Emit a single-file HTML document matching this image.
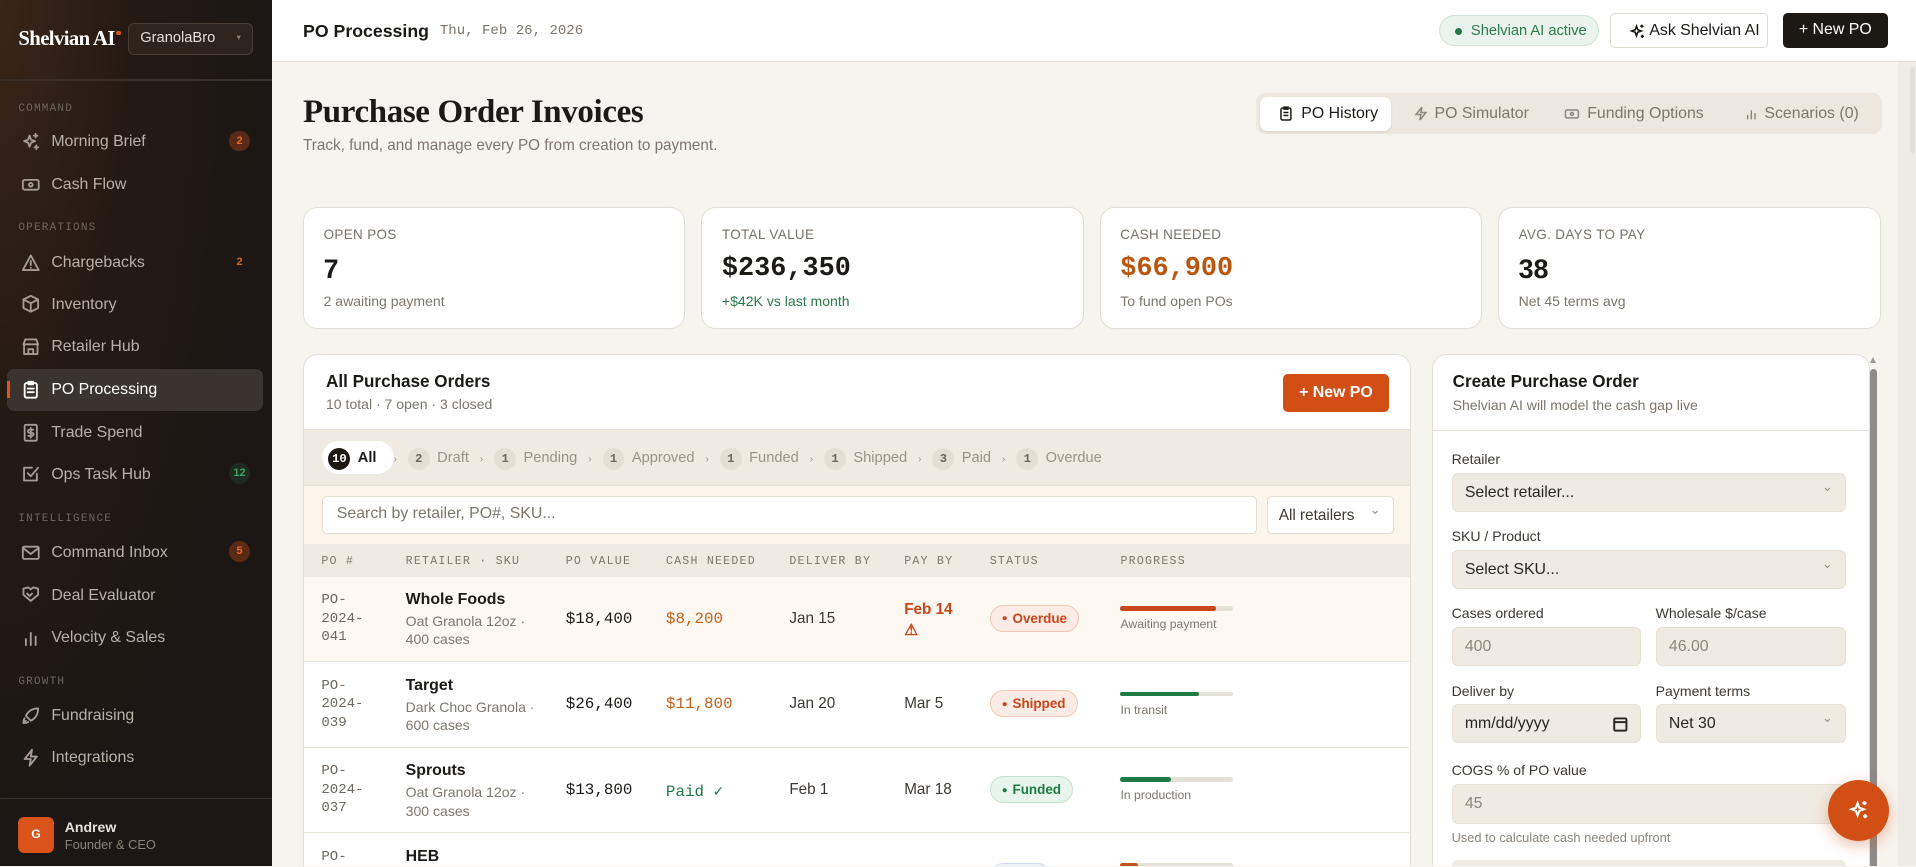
<!DOCTYPE html>
<html><head><meta charset="utf-8">
<style>
*{box-sizing:border-box;margin:0;padding:0}
html,body{width:1916px;height:867px;overflow:hidden}
body{background:#f6f4ef;font-family:"Liberation Sans",sans-serif;color:#1c1a17}
#root{zoom:1.2219;width:1568px;height:709px;position:relative;overflow:hidden}
.abs{position:absolute}
.side{left:0;top:0;width:223px;height:709px;background:radial-gradient(ellipse at 0 0,#3a2518 0%,#231a14 35%,#1c1714 70%);color:#cfc8c0}
.logo{left:15px;top:22px;font-family:"Liberation Serif",serif;font-weight:bold;font-size:17px;color:#fff;letter-spacing:-0.5px}
.logo i{display:inline-block;width:4px;height:4px;border-radius:50%;background:#e0541c;vertical-align:top;margin-top:3px;margin-left:1px}
.org{left:105px;top:19px;width:102px;height:26px;border:1px solid #4a3d34;border-radius:5px;background:#2e241e;color:#e6e0da;font-size:12px;padding:5px 9px}
.org:after{content:"▾";position:absolute;right:9px;top:6px;font-size:7px;color:#8a7f75}
.sdiv{left:0;width:223px;height:1px;background:#3a2f28}
.sec{left:15px;font-family:"Liberation Mono",monospace;font-size:9px;letter-spacing:1px;color:#6e655d}
.ni{left:6px;width:209px;height:34px;font-size:13px;color:#b9b1a9;padding:10px 0 0 36px}
.ni svg{position:absolute;left:11px;top:9px;width:16px;height:16px;stroke:#a59d95;fill:none;stroke-width:1.5;stroke-linecap:round;stroke-linejoin:round}
.ni.act{background:#3a3330;color:#fff;border-radius:6px}
.ni.act svg{stroke:#fff}
.ni.act:before{content:"";position:absolute;left:0;top:10px;width:2px;height:14px;background:#e0541c}
.bd{position:absolute;right:10px;top:8px;width:18px;height:17px;border-radius:9px;font-size:9px;text-align:center;line-height:17px;font-weight:bold}
.bo{background:#5a2a17;color:#e5682b}.bg{color:#3aa160;background:#1f2a22}
.hdr{left:223px;top:0;width:1345px;height:51px;background:#fff;border-bottom:1px solid #e6e1d8}
.card{background:#fff;border:1px solid #e4dfd5;border-radius:12px}
.lbl{font-size:11px;color:#777068;letter-spacing:.3px}
.mono{font-family:"Liberation Mono",monospace}
.pill{display:inline-block;width:18px;height:18px;border-radius:9px;background:#e4dfd4;color:#6e675f;font-size:10px;font-weight:bold;text-align:center;line-height:18px;margin-right:6px;font-family:"Liberation Mono",monospace}
.th{font-family:"Liberation Mono",monospace;font-size:9.5px;letter-spacing:1px;color:#7d766d;top:454px}
.row{left:249px;width:904px;height:70px;border-bottom:1px solid #ebe6dd}
.cell{position:absolute;font-size:12.5px}
.po{font-family:"Liberation Mono",monospace;font-size:11.5px;color:#6f6860;line-height:15px;left:14px;top:12px}
.rt b{display:block;font-size:13px;color:#1c1a17;margin-bottom:2px}
.rt{left:83px;top:12px;font-size:11.5px;color:#7d766d;line-height:15px;width:110px}
.val{left:214px;top:27px;font-family:"Liberation Mono",monospace;font-size:13px}
.cn{left:296px;top:27px;font-family:"Liberation Mono",monospace;font-size:13px;color:#c0621c}
.dl{left:397px;top:27px;color:#3d3833}
.pb{left:491px;top:27px;color:#3d3833}
.st{left:561px;top:23px;height:22px;border-radius:11px;font-size:11px;font-weight:bold;padding:4px 9px 0 9px}
.st:before{content:"●";font-size:8px;margin-right:4px;vertical-align:1px}
.ov{background:#fdece6;border:1px solid #f3c7b6;color:#c9461a}
.fu{background:#e8f5ec;border:1px solid #c2e3cd;color:#1f7a45}
.prog{left:668px;top:24px;width:92px;height:4px;border-radius:2px;background:#e6e1d7}
.prog i{display:block;height:4px;border-radius:2px}
.pl{left:668px;top:33px;font-size:10px;color:#7d766d}
.fl{font-size:11.5px;color:#3d3833;left:1188px}
.inp{left:1188px;height:32px;background:#f0ebe2;border:1px solid #e6e0d5;border-radius:5px;font-size:13px;color:#2a2622;padding:8px 10px}
.inp.g{color:#8d867e}
.chev:after{content:"⌄";position:absolute;right:10px;top:4px;font-size:11px;color:#9a938a}
</style></head><body><div id="root">

<div class="abs side">
 <div class="abs logo">Shelvian AI<i></i></div>
 <div class="abs org">GranolaBro</div>
 <div class="abs sdiv" style="top:65px"></div>
 <div class="abs sec" style="top:84px">COMMAND</div>
 <div class="abs ni" style="top:99px"><svg viewBox="0 0 16 16"><path d="M7 3l1.2 3.3L11.5 7.5 8.2 8.7 7 12 5.8 8.7 2.5 7.5 5.8 6.3z"/><path d="M12 1.5v3M10.5 3h3M12.5 11v3M11 12.5h3"/></svg>Morning Brief<span class="bd bo">2</span></div>
 <div class="abs ni" style="top:134px"><svg viewBox="0 0 16 16"><rect x="1.5" y="4" width="13" height="8" rx="1.5"/><circle cx="8" cy="8" r="1.5"/></svg>Cash Flow</div>
 <div class="abs sec" style="top:182px">OPERATIONS</div>
 <div class="abs ni" style="top:198px"><svg viewBox="0 0 16 16"><path d="M8 2L1.5 14h13z"/><path d="M8 6.5v3.5M8 12v.2"/></svg>Chargebacks<span class="bd" style="color:#d0611f">2</span></div>
 <div class="abs ni" style="top:232px"><svg viewBox="0 0 16 16"><path d="M8 1.5l6 3v7l-6 3-6-3v-7z"/><path d="M2 4.5l6 3 6-3M8 7.5v7"/></svg>Inventory</div>
 <div class="abs ni" style="top:267px"><svg viewBox="0 0 16 16"><path d="M2 6l1.5-4h9L14 6z"/><path d="M2.5 6v8h11V6M6 14v-4h4v4"/></svg>Retailer Hub</div>
 <div class="abs ni act" style="top:302px"><svg viewBox="0 0 16 16"><rect x="3" y="2.5" width="10" height="12" rx="1.5"/><path d="M6 1.5h4v2H6zM5.5 7h5M5.5 10h5"/></svg>PO Processing</div>
 <div class="abs ni" style="top:337px"><svg viewBox="0 0 16 16"><rect x="3" y="1.5" width="10" height="13" rx="1"/><path d="M10 5.5H7a1.2 1.2 0 000 2.5h2a1.2 1.2 0 010 2.5H6M8 4v8"/></svg>Trade Spend</div>
 <div class="abs ni" style="top:371px"><svg viewBox="0 0 16 16"><path d="M13 8v5.5H2.5V3H9"/><path d="M5.5 7.5L8 10l6-7"/></svg>Ops Task Hub<span class="bd bg">12</span></div>
 <div class="abs sec" style="top:420px">INTELLIGENCE</div>
 <div class="abs ni" style="top:435px"><svg viewBox="0 0 16 16"><rect x="1.5" y="3" width="13" height="10" rx="1"/><path d="M1.5 4l6.5 5 6.5-5"/></svg>Command Inbox<span class="bd bo">5</span></div>
 <div class="abs ni" style="top:470px"><svg viewBox="0 0 16 16"><path d="M2 3l4-1 2 1.5L10 2l4 1v5l-6 5-6-5z"/><path d="M5 7l2 2 2-2"/></svg>Deal Evaluator</div>
 <div class="abs ni" style="top:505px"><svg viewBox="0 0 16 16"><path d="M4 14V9M8 14V4M12 14V7"/></svg>Velocity &amp; Sales</div>
 <div class="abs sec" style="top:553px">GROWTH</div>
 <div class="abs ni" style="top:569px"><svg viewBox="0 0 16 16"><path d="M6 10L4 8c2-4 5-6 10-6 0 5-2 8-6 10z"/><path d="M4 12l-2 2M3 10c-1 1-1 3-1 4 1 0 3 0 4-1"/></svg>Fundraising</div>
 <div class="abs ni" style="top:603px"><svg viewBox="0 0 16 16"><path d="M9 1.5L3 9h5l-1 5.5L13 7H8z"/></svg>Integrations</div>
 <div class="abs sdiv" style="top:653px"></div>
 <div class="abs" style="left:15px;top:669px;width:29px;height:29px;border-radius:5px;background:#d9531a;color:#fff;font-size:10px;font-weight:bold;text-align:center;line-height:29px">G</div>
 <div class="abs" style="left:53px;top:670px;font-size:11.5px;color:#e8e2dc;font-weight:bold">Andrew</div>
 <div class="abs" style="left:53px;top:685px;font-size:10.5px;color:#8c837a">Founder &amp; CEO</div>
</div>

<div class="abs hdr">
 <div class="abs" style="left:25px;top:17px;font-size:14.5px;font-weight:bold;color:#1c1a17">PO Processing</div>
 <div class="abs mono" style="left:137px;top:19px;font-size:11.5px;color:#7d766d">Thu, Feb 26, 2026</div>
 <div class="abs" style="left:955px;top:12px;width:131px;height:26px;border-radius:13px;background:#eaf3ee;border:1px solid #cfe3d6;color:#2a7a4b;font-size:12px;padding:6px 0 0 25px">Shelvian AI active<span style="position:absolute;left:12px;top:10px;width:6px;height:6px;border-radius:3px;background:#1f7a45"></span></div>
 <div class="abs" style="left:1095px;top:11px;width:129px;height:28px;border:1px solid #e0dbd2;border-radius:4px;background:#fff;font-size:13px;padding:6px 0 0 31px">Ask Shelvian AI<svg style="position:absolute;left:14px;top:7px" width="14" height="14" viewBox="0 0 16 16" fill="none" stroke="#1c1a17" stroke-width="1.5"><path d="M7 3l1.2 3.3L11.5 7.5 8.2 8.7 7 12 5.8 8.7 2.5 7.5 5.8 6.3z"/><path d="M12 1.5v3M10.5 3h3M12.5 11v3M11 12.5h3"/></svg></div>
 <div class="abs" style="left:1236px;top:11px;width:86px;height:28px;border-radius:4px;background:#1c1814;color:#fff;font-size:13px;text-align:center;line-height:28px">+ New PO</div>
</div>
<div class="abs" style="left:1553px;top:51px;width:15px;height:659px;background:#efece7"></div>
<div class="abs" style="left:1563px;top:55px;width:4px;height:70px;background:#e2ded8;border-radius:2px"></div>

<div class="abs" style="left:248px;top:77px;font-family:'Liberation Serif',serif;font-weight:bold;font-size:27px;letter-spacing:-0.3px">Purchase Order Invoices</div>
<div class="abs" style="left:248px;top:112px;font-size:12.5px;color:#7d766d">Track, fund, and manage every PO from creation to payment.</div>

<div class="abs" style="left:1028px;top:76px;width:512px;height:34px;background:#ece8df;border-radius:8px;font-size:13px;color:#7d766d">
 <div class="abs" style="left:3px;top:3px;width:107px;height:28px;background:#fff;border-radius:6px;box-shadow:0 1px 2px rgba(0,0,0,.08);color:#1c1a17;padding:7px 0 0 34px">PO History<svg style="position:absolute;left:15px;top:7px" width="13" height="14" viewBox="0 0 16 16" fill="none" stroke="#1c1a17" stroke-width="1.5"><rect x="3" y="2.5" width="10" height="12" rx="1.5"/><path d="M6 1.5h4v2H6zM5.5 7h5M5.5 10h5"/></svg></div>
 <div class="abs" style="left:128px;top:10px;padding-left:18px">PO Simulator<svg style="position:absolute;left:0;top:0" width="13" height="14" viewBox="0 0 16 16" fill="none" stroke="#8d867e" stroke-width="1.5"><path d="M9 1.5L3 9h5l-1 5.5L13 7H8z"/></svg></div>
 <div class="abs" style="left:252px;top:10px;padding-left:19px">Funding Options<svg style="position:absolute;left:0;top:1px" width="13" height="13" viewBox="0 0 16 16" fill="none" stroke="#8d867e" stroke-width="1.5"><rect x="1.5" y="4" width="13" height="8" rx="1.5"/><circle cx="8" cy="8" r="1.5"/></svg></div>
 <div class="abs" style="left:399px;top:10px;padding-left:17px">Scenarios (0)<svg style="position:absolute;left:0;top:1px" width="12" height="13" viewBox="0 0 16 16" fill="none" stroke="#8d867e" stroke-width="1.5"><path d="M4 14V9M8 14V4M12 14V7"/></svg></div>
</div>

<div class="abs card" style="left:248px;top:169px;width:313px;height:100px"><div class="abs lbl" style="left:16px;top:16px">OPEN POS</div><div class="abs" style="left:16px;top:38px;font-size:22px;font-weight:bold">7</div><div class="abs" style="left:16px;top:70px;font-size:11.5px;color:#7d766d">2 awaiting payment</div></div>
<div class="abs card" style="left:574px;top:169px;width:313px;height:100px"><div class="abs lbl" style="left:16px;top:16px">TOTAL VALUE</div><div class="abs mono" style="left:16px;top:38px;font-size:22px;font-weight:bold">$236,350</div><div class="abs" style="left:16px;top:70px;font-size:11.5px;color:#2a7a4b">+$42K vs last month</div></div>
<div class="abs card" style="left:900px;top:169px;width:313px;height:100px"><div class="abs lbl" style="left:16px;top:16px">CASH NEEDED</div><div class="abs mono" style="left:16px;top:38px;font-size:22px;font-weight:bold;color:#b8560f">$66,900</div><div class="abs" style="left:16px;top:70px;font-size:11.5px;color:#7d766d">To fund open POs</div></div>
<div class="abs card" style="left:1226px;top:169px;width:313px;height:100px"><div class="abs lbl" style="left:16px;top:16px">AVG. DAYS TO PAY</div><div class="abs" style="left:16px;top:38px;font-size:22px;font-weight:bold">38</div><div class="abs" style="left:16px;top:70px;font-size:11.5px;color:#7d766d">Net 45 terms avg</div></div>

<div class="abs card" style="left:248px;top:290px;width:907px;height:420px;overflow:hidden;border-radius:12px 12px 0 0">
 <div class="abs" style="left:18px;top:14px;font-size:14px;font-weight:bold">All Purchase Orders</div>
 <div class="abs" style="left:18px;top:33px;font-size:11.5px;color:#7d766d">10 total · 7 open · 3 closed</div>
 <div class="abs" style="left:801px;top:15px;width:87px;height:31px;border-radius:4px;background:#d14f14;color:#fff;font-size:13px;font-weight:bold;text-align:center;line-height:31px">+ New PO</div>
 <div class="abs" style="left:0;top:60px;width:907px;height:47px;background:#efebe2;border-top:1px solid #e6e1d8;border-bottom:1px solid #e6e1d8"></div>
 <div class="abs" style="left:15px;top:70px;width:59px;height:27px;background:#fff;border-radius:14px"></div>
 <div class="abs" style="left:20px;top:76px;font-size:12px;color:#9a938a;white-space:nowrap;word-spacing:0">
  <span class="pill" style="background:#1c1814;color:#fff">10</span><b style="color:#1c1a17">All</b><span style="margin:0 9px 0 14px;font-size:8px">›</span><span class="pill">2</span>Draft<span style="margin:0 9px;font-size:8px">›</span><span class="pill">1</span>Pending<span style="margin:0 9px;font-size:8px">›</span><span class="pill">1</span>Approved<span style="margin:0 9px;font-size:8px">›</span><span class="pill">1</span>Funded<span style="margin:0 9px;font-size:8px">›</span><span class="pill">1</span>Shipped<span style="margin:0 9px;font-size:8px">›</span><span class="pill">3</span>Paid<span style="margin:0 9px;font-size:8px">›</span><span class="pill">1</span>Overdue</div>
 <div class="abs" style="left:0;top:107px;width:907px;height:47px;background:#fcf5ec"></div>
 <div class="abs" style="left:15px;top:115px;width:765px;height:31px;background:#fff;border:1px solid #e3ded4;border-radius:4px;font-size:13px;color:#7d766d;padding:7px 11px">Search by retailer, PO#, SKU...</div>
 <div class="abs chev" style="left:788px;top:115px;width:104px;height:31px;background:#fff;border:1px solid #e3ded4;border-radius:4px;font-size:12.5px;color:#3d3833;padding:8px 9px">All retailers</div>
 <div class="abs" style="left:0;top:154px;width:907px;height:28px;background:#efebe2"></div>
</div>
<div class="abs th" style="left:263px">PO #</div><div class="abs th" style="left:332px">RETAILER · SKU</div><div class="abs th" style="left:463px">PO VALUE</div><div class="abs th" style="left:545px">CASH NEEDED</div><div class="abs th" style="left:646px">DELIVER BY</div><div class="abs th" style="left:740px">PAY BY</div><div class="abs th" style="left:810px">STATUS</div><div class="abs th" style="left:917px">PROGRESS</div>

<div class="abs row" style="top:472px;background:#fdf8f2">
 <div class="cell po">PO-<br>2024-<br>041</div><div class="cell rt"><b>Whole Foods</b>Oat Granola 12oz · 400 cases</div>
 <div class="cell val">$18,400</div><div class="cell cn">$8,200</div><div class="cell dl">Jan 15</div>
 <div class="cell" style="left:491px;top:19px;color:#c9461a;font-weight:bold;line-height:17px">Feb 14<br>⚠</div>
 <div class="cell st ov">Overdue</div><div class="cell prog"><i style="width:78px;background:#c9461a"></i></div><div class="cell pl">Awaiting payment</div>
</div>
<div class="abs row" style="top:542px;background:#fff">
 <div class="cell po">PO-<br>2024-<br>039</div><div class="cell rt"><b>Target</b>Dark Choc Granola · 600 cases</div>
 <div class="cell val">$26,400</div><div class="cell cn">$11,800</div><div class="cell dl">Jan 20</div><div class="cell pb">Mar 5</div>
 <div class="cell st ov">Shipped</div><div class="cell prog"><i style="width:64px;background:#1f7a45"></i></div><div class="cell pl">In transit</div>
</div>
<div class="abs row" style="top:612px;background:#fff">
 <div class="cell po">PO-<br>2024-<br>037</div><div class="cell rt"><b>Sprouts</b>Oat Granola 12oz · 300 cases</div>
 <div class="cell val">$13,800</div><div class="cell cn" style="color:#1f7a45">Paid ✓</div><div class="cell dl">Feb 1</div><div class="cell pb">Mar 18</div>
 <div class="cell st fu">Funded</div><div class="cell prog"><i style="width:41px;background:#1f7a45"></i></div><div class="cell pl">In production</div>
</div>
<div class="abs row" style="top:682px;height:27px;background:#fff;border:0;overflow:hidden">
 <div class="cell po">PO-</div><div class="cell rt"><b>HEB</b></div>
 <div class="cell st" style="top:24px;background:#eef3fb;border:1px solid #cfdcef;width:50px"></div><div class="cell prog" style="top:24px"><i style="width:14px;background:#c0561a"></i></div>
</div>

<div class="abs card" style="left:1172px;top:290px;width:358px;height:420px;border-radius:12px 12px 0 0;overflow:hidden">
 <div class="abs" style="left:16px;top:14px;font-size:14px;font-weight:bold">Create Purchase Order</div>
 <div class="abs" style="left:16px;top:34px;font-size:11.5px;color:#7d766d">Shelvian AI will model the cash gap live</div>
 <div class="abs" style="left:0;top:61px;width:358px;height:1px;background:#e6e1d8"></div>
</div>
<div class="abs" style="left:1530px;top:292px;width:0;height:0;border-left:3px solid transparent;border-right:3px solid transparent;border-bottom:5px solid #9a9a9a"></div>
<div class="abs" style="left:1530px;top:302px;width:6px;height:407px;background:#8c8c8c;border-radius:3px 3px 0 0"></div>

<div class="abs fl" style="top:369px">Retailer</div>
<div class="abs inp chev" style="top:387px;width:323px">Select retailer...</div>
<div class="abs fl" style="top:432px">SKU / Product</div>
<div class="abs inp chev" style="top:450px;width:323px">Select SKU...</div>
<div class="abs fl" style="top:495px">Cases ordered</div>
<div class="abs fl" style="top:495px;left:1355px">Wholesale $/case</div>
<div class="abs inp g" style="top:513px;width:155px">400</div>
<div class="abs inp g" style="top:513px;width:156px;left:1355px">46.00</div>
<div class="abs fl" style="top:559px">Deliver by</div>
<div class="abs fl" style="top:559px;left:1355px">Payment terms</div>
<div class="abs inp" style="top:576px;width:155px">mm/dd/yyyy<svg style="position:absolute;right:10px;top:9px" width="12" height="13" viewBox="0 0 12 13" fill="none" stroke="#2a2622" stroke-width="1.6"><rect x="1" y="2" width="10" height="10" rx="1"/><path d="M1 5h10"/></svg></div>
<div class="abs inp chev" style="top:576px;width:156px;left:1355px">Net 30</div>
<div class="abs fl" style="top:624px">COGS % of PO value</div>
<div class="abs inp g" style="top:642px;width:323px">45</div>
<div class="abs" style="left:1188px;top:679px;font-size:10.5px;color:#8d867e">Used to calculate cash needed upfront</div>
<div class="abs" style="left:1188px;top:704px;width:323px;height:5px;background:#f0ebe2;border-radius:5px 5px 0 0"></div>

<div class="abs" style="left:1496px;top:638px;width:50px;height:50px;border-radius:25px;background:#d14f14;box-shadow:0 4px 12px rgba(209,79,20,.35)"><svg style="position:absolute;left:16px;top:16px" width="18" height="18" viewBox="0 0 16 16" fill="none" stroke="#fff" stroke-width="1.5"><path d="M7 3l1.2 3.3L11.5 7.5 8.2 8.7 7 12 5.8 8.7 2.5 7.5 5.8 6.3z"/><path d="M12 1.5v3M10.5 3h3M12.5 11v3M11 12.5h3"/></svg></div>

</div></body></html>
